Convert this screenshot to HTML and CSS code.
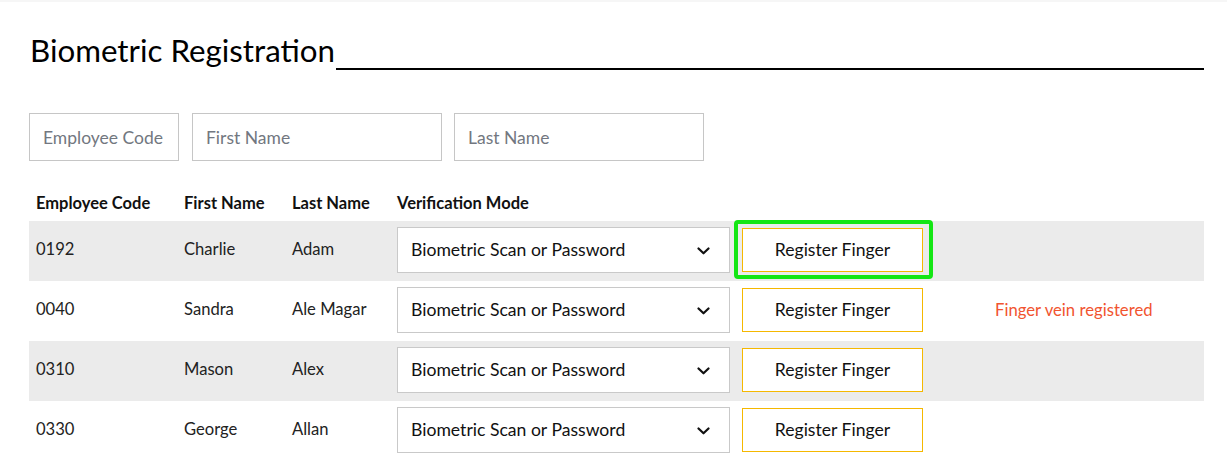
FILE: index.html
```html
<!DOCTYPE html>
<html lang="en">
<head>
<meta charset="utf-8">
<title>Biometric Registration</title>
<link rel="stylesheet" href="styles.css">
</head>
<body>
<div class="topstrip"></div>
<main class="page">
  <header class="heading">
    <h1 class="title">Biometric Registration</h1>
    <div class="rule"></div>
  </header>

  <form class="filters">
    <input class="field field-code" type="text" placeholder="Employee Code">
    <input class="field field-name" type="text" placeholder="First Name">
    <input class="field field-name" type="text" placeholder="Last Name">
  </form>

  <div class="table">
    <div class="row head">
      <div class="cell">Employee Code</div>
      <div class="cell">First Name</div>
      <div class="cell">Last Name</div>
      <div class="cell">Verification Mode</div>
      <div class="cell"></div>
      <div class="cell"></div>
    </div>

    <div class="row shaded">
      <div class="cell text">0192</div>
      <div class="cell text">Charlie</div>
      <div class="cell text">Adam</div>
      <div class="cell"><div class="select"><span>Biometric Scan or Password</span><svg class="chev" width="13" height="8" viewBox="0 0 13 8"><path d="M1.5 1.5 L6.5 6.3 L11.5 1.5" fill="none" stroke="#111" stroke-width="2.2" stroke-linecap="round" stroke-linejoin="round"/></svg></div></div>
      <div class="cell"><button class="btn focused" type="button">Register Finger</button></div>
      <div class="cell status"></div>
    </div>

    <div class="row">
      <div class="cell text">0040</div>
      <div class="cell text">Sandra</div>
      <div class="cell text">Ale Magar</div>
      <div class="cell"><div class="select"><span>Biometric Scan or Password</span><svg class="chev" width="13" height="8" viewBox="0 0 13 8"><path d="M1.5 1.5 L6.5 6.3 L11.5 1.5" fill="none" stroke="#111" stroke-width="2.2" stroke-linecap="round" stroke-linejoin="round"/></svg></div></div>
      <div class="cell"><button class="btn" type="button">Register Finger</button></div>
      <div class="cell status">Finger vein registered</div>
    </div>

    <div class="row shaded">
      <div class="cell text">0310</div>
      <div class="cell text">Mason</div>
      <div class="cell text">Alex</div>
      <div class="cell"><div class="select"><span>Biometric Scan or Password</span><svg class="chev" width="13" height="8" viewBox="0 0 13 8"><path d="M1.5 1.5 L6.5 6.3 L11.5 1.5" fill="none" stroke="#111" stroke-width="2.2" stroke-linecap="round" stroke-linejoin="round"/></svg></div></div>
      <div class="cell"><button class="btn" type="button">Register Finger</button></div>
      <div class="cell status"></div>
    </div>

    <div class="row">
      <div class="cell text">0330</div>
      <div class="cell text">George</div>
      <div class="cell text">Allan</div>
      <div class="cell"><div class="select"><span>Biometric Scan or Password</span><svg class="chev" width="13" height="8" viewBox="0 0 13 8"><path d="M1.5 1.5 L6.5 6.3 L11.5 1.5" fill="none" stroke="#111" stroke-width="2.2" stroke-linecap="round" stroke-linejoin="round"/></svg></div></div>
      <div class="cell"><button class="btn" type="button">Register Finger</button></div>
      <div class="cell status"></div>
    </div>
  </div>
</main>
</body>
</html>
```

FILE: styles.css
```css
* { box-sizing: border-box; }

html, body {
  margin: 0;
  padding: 0;
  background: #fff;
  font-family: Lato, "Open Sans", Arial, sans-serif;
  color: #1a1a1a;
}

.topstrip {
  height: 2px;
  background: #f6f6f6;
}

.page {
  padding: 29px 23px 0 29px;
}

.heading {
  display: flex;
  align-items: flex-start;
  height: 38px;
}

.title {
  margin: 0 1px 0 1px;
  font-size: 31.3px;
  line-height: 38px;
  font-weight: 400;
  color: #000;
  white-space: nowrap;
}

.rule {
  flex: 1;
  height: 2px;
  margin-top: 37px;
  background: #000;
}

.filters {
  display: flex;
  gap: 13px;
  margin: 44px 0 0 0;
}

.field {
  height: 48px;
  border: 1px solid #c6c6c6;
  border-radius: 0;
  padding: 0 13px;
  font-family: Lato, "Open Sans", Arial, sans-serif;
  font-size: 17.5px;
  color: #222;
  background: #fff;
  outline: none;
}

.field::placeholder { color: #727780; }

.field-code { width: 150px; }
.field-name { width: 250px; }
.field-name + .field-name { margin-left: -1px; }

.table {
  margin-top: 20px;
  width: 1175px;
}

.row {
  display: grid;
  grid-template-columns: 148px 108px 105px 343px 201px 1fr;
  align-items: center;
  height: 60px;
  padding-bottom: 2px;
}

.row.head {
  height: 40px;
  padding-top: 3px;
  padding-bottom: 0;
  font-weight: 700;
  font-size: 16.5px;
  color: #111;
}

.row.shaded { background: #ebebeb; }

.cell {
  padding-left: 7px;
  white-space: nowrap;
}

.text {
  font-size: 16.6px;
  color: #222;
  padding-bottom: 3px;
}

.select {
  display: flex;
  align-items: center;
  justify-content: space-between;
  width: 333px;
  height: 46px;
  padding: 0 19px 0 13px;
  border: 1px solid #c9c9c9;
  background: #fff;
  font-size: 17.6px;
  color: #111;
}

.select span { padding-bottom: 1px; }

.chev { display: block; margin-top: 1px; }

.btn {
  position: relative;
  display: block;
  width: 181px;
  height: 44px;
  margin-left: 2px;
  border: 1px solid #f5b800;
  border-radius: 0;
  background: #fff;
  font-family: Lato, "Open Sans", Arial, sans-serif;
  font-size: 17.6px;
  color: #111;
  padding: 0 0 2px 0;
  cursor: pointer;
}

.btn.focused::after {
  content: "";
  position: absolute;
  left: -9px;
  top: -9px;
  right: -11px;
  bottom: -8px;
  border: 4px solid #14e614;
  border-radius: 4px;
}

.status {
  padding-left: 61px;
  font-size: 16.7px;
  color: #f1542f;
}
```
